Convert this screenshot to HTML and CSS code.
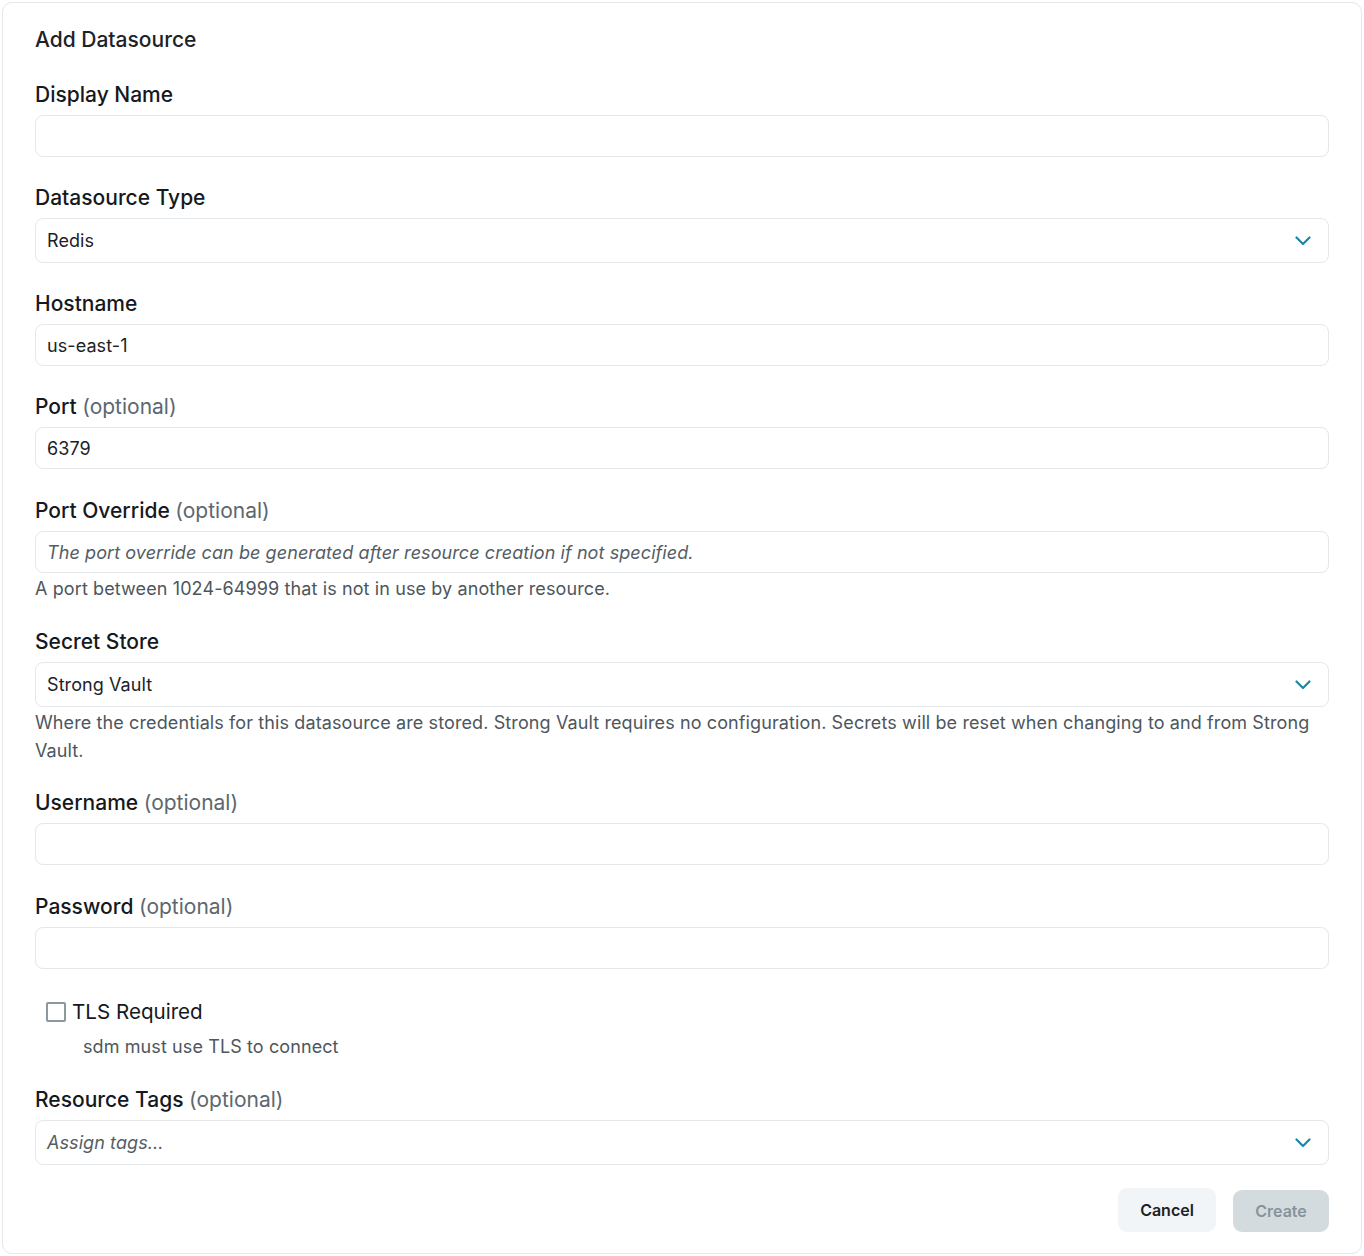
FILE: index.html
```html
<!DOCTYPE html>
<html lang="en">
<head>
<meta charset="utf-8">
<title>Add Datasource</title>
<link rel="stylesheet" href="styles.css">
</head>
<body>
<div class="card">
  <h1 class="title">Add Datasource</h1>

  <div class="group first">
    <label class="label">Display Name</label>
    <div class="input"></div>
  </div>

  <div class="group">
    <label class="label">Datasource Type</label>
    <div class="input select"><span>Redis</span>
      <svg class="chev" viewBox="0 0 16 10" width="16" height="10"><path d="M1.5 1.5 L8 8 L14.5 1.5" fill="none" stroke="#1b87a6" stroke-width="2.2" stroke-linecap="round" stroke-linejoin="round"/></svg>
    </div>
  </div>

  <div class="group">
    <label class="label">Hostname</label>
    <div class="input"><span>us-east-1</span></div>
  </div>

  <div class="group">
    <label class="label">Port <span class="opt">(optional)</span></label>
    <div class="input"><span>6379</span></div>
  </div>

  <div class="group g-po">
    <label class="label">Port Override <span class="opt">(optional)</span></label>
    <div class="input"><span class="ph">The port override can be generated after resource creation if not specified.</span></div>
    <p class="help">A port between 1024-64999 that is not in use by another resource.</p>
  </div>

  <div class="group g-after-help">
    <label class="label">Secret Store</label>
    <div class="input select"><span>Strong Vault</span>
      <svg class="chev" viewBox="0 0 16 10" width="16" height="10"><path d="M1.5 1.5 L8 8 L14.5 1.5" fill="none" stroke="#1b87a6" stroke-width="2.2" stroke-linecap="round" stroke-linejoin="round"/></svg>
    </div>
    <p class="help">Where the credentials for this datasource are stored. Strong Vault requires no configuration. Secrets will be reset when changing to and from Strong Vault.</p>
  </div>

  <div class="group g-after-help2">
    <label class="label">Username <span class="opt">(optional)</span></label>
    <div class="input"></div>
  </div>

  <div class="group g-pw">
    <label class="label">Password <span class="opt">(optional)</span></label>
    <div class="input"></div>
  </div>

  <div class="check-group">
    <div class="check-row">
      <span class="box"></span>
      <span class="check-label">TLS Required</span>
    </div>
    <p class="check-help">sdm must use TLS to connect</p>
  </div>

  <div class="group g-tags">
    <label class="label">Resource Tags <span class="opt">(optional)</span></label>
    <div class="input select"><span class="ph">Assign tags...</span>
      <svg class="chev" viewBox="0 0 16 10" width="16" height="10"><path d="M1.5 1.5 L8 8 L14.5 1.5" fill="none" stroke="#1b87a6" stroke-width="2.2" stroke-linecap="round" stroke-linejoin="round"/></svg>
    </div>
  </div>

  <div class="actions">
    <button class="btn cancel" type="button">Cancel</button>
    <button class="btn create" type="button">Create</button>
  </div>
</div>
</body>
</html>
```

FILE: styles.css
```css
html, body {
  margin: 0;
  padding: 0;
  background: #ffffff;
}
body {
  font-family: Inter, "Noto Sans", "Liberation Sans", sans-serif;
  color: #1d2227;
  padding: 2px;
}
.card {
  box-sizing: border-box;
  width: 1360px;
  height: 1252px;
  border: 1px solid #e2e7ea;
  border-radius: 10px;
  padding: 23px 32px 20px 32px;
  display: flex;
  flex-direction: column;
}
.title {
  margin: 0;
  font-size: 21px;
  line-height: 28px;
  font-weight: 500;
  color: #1d2227;
}
.group {
  margin-top: 27px;
  display: flex;
  flex-direction: column;
}
.group.g-po { margin-top: 28px; }
.group.g-after-help { margin-top: 25px; }
.group.g-after-help2 { margin-top: 24px; }
.group.g-pw { margin-top: 28px; }
.group.g-tags { margin-top: 25px; }
.label {
  font-size: 21px;
  line-height: 28px;
  font-weight: 500;
  color: #15191d;
  margin-bottom: 6px;
}
.opt {
  font-weight: 400;
  color: #5d676e;
}
.input {
  box-sizing: border-box;
  height: 42px;
  border: 1px solid #e4e8eb;
  border-radius: 8px;
  padding: 0 11px;
  display: flex;
  align-items: center;
  font-size: 18px;
  letter-spacing: 0.08px;
  color: #1d2227;
  background: #fff;
}
.input.select {
  height: 45px;
  justify-content: space-between;
  padding-right: 17px;
}
.chev { display: block; }
.ph {
  font-style: italic;
  color: #545d65;
}
.help {
  margin: 2px 0 0 0;
  font-size: 18px;
  line-height: 28px;
  letter-spacing: 0.11px;
  color: #4d565d;
}
.check-group {
  margin-top: 29px;
  display: flex;
  flex-direction: column;
}
.check-row {
  display: flex;
  align-items: center;
  padding-left: 11px;
  height: 28px;
}
.box {
  box-sizing: border-box;
  width: 20px;
  height: 20px;
  border: 2px solid #8d989e;
  border-radius: 2px;
  margin-right: 6px;
}
.check-label {
  font-size: 20.6px;
  line-height: 28px;
  color: #15191d;
}
.check-help {
  margin: 7px 0 0 48px;
  font-size: 18px;
  line-height: 28px;
  letter-spacing: 0.1px;
  color: #4d565d;
}
.actions {
  margin-top: 23px;
  display: flex;
  justify-content: flex-end;
  align-items: center;
  gap: 17px;
}
.btn {
  font-family: Inter, "Noto Sans", "Liberation Sans", sans-serif;
  font-size: 16px;
  font-weight: 600;
  border: none;
  border-radius: 9px;
  height: 44px;
  padding: 0 20px;
}
.cancel {
  background: #f1f5f7;
  color: #1d2227;
  width: 98px;
}
.create {
  background: #d4dbde;
  color: #87939a;
  width: 96px;
  height: 42px;
  margin-top: 2px;
}
```
